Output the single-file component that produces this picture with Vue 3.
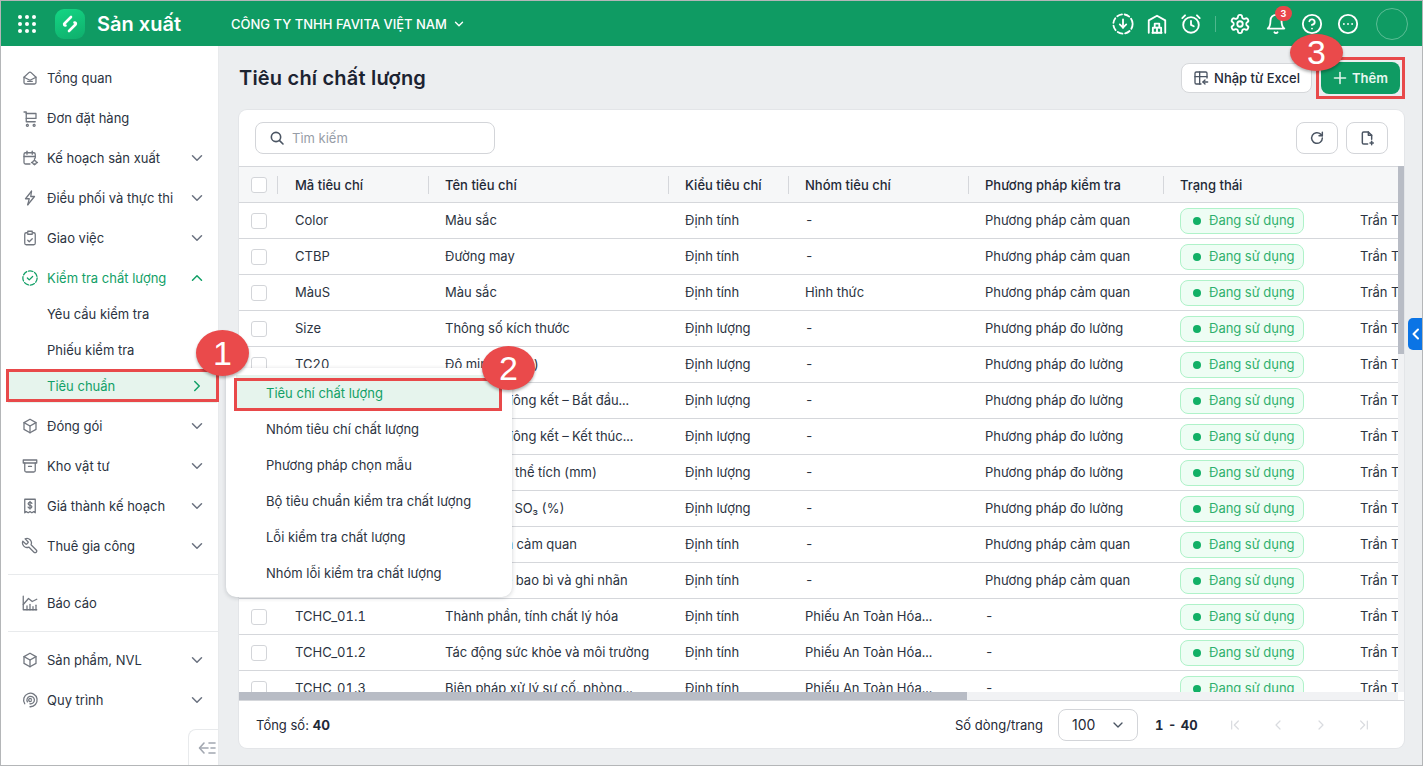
<script setup>
const chev = 'M6 9l6 6 6-6'
const menuTop = [
  { label: 'Tổng quan', d: ['M4 11l6.5-6.2a2.2 2.2 0 0 1 3 0L20 11v7a2 2 0 0 1-2 2H6a2 2 0 0 1-2-2z', 'M4 11l8 4 8-4', 'M9 16.5h6'] },
  { label: 'Đơn đặt hàng', d: ['M4 4h3v13h12', 'M7 6h13v6.5H7', 'M8.5 20.5a1.3 1.3 0 1 0 .01 0', 'M17.5 20.5a1.3 1.3 0 1 0 .01 0'] },
  { label: 'Kế hoạch sản xuất', arrow: true, d: ['M12 20H6a2 2 0 0 1-2-2V7a2 2 0 0 1 2-2h11a2 2 0 0 1 2 2v5', 'M4 10h15', 'M8 3v4', 'M15 3v4', 'M18 15.5a2.5 2.5 0 1 0 .01 0', 'M18 14v-1', 'M18 21v-1', 'M15 18h-1', 'M22 18h-1'] },
  { label: 'Điều phối và thực thi', arrow: true, d: ['M14 3L6 13h5l-2 8', 'M14 3l-1 7h5l-9 11'] },
  { label: 'Giao việc', arrow: true, d: ['M8 5H7a2 2 0 0 0-2 2v12a2 2 0 0 0 2 2h10a2 2 0 0 0 2-2V7a2 2 0 0 0-2-2h-1', 'M9 3h6v4H9z', 'M9 15l2 2 4-4'] },
]
const menuBottom = [
  { label: 'Đóng gói', arrow: true, d: ['M12 3l8 4.5v9L12 21l-8-4.5v-9z', 'M4 7.5l8 4.5 8-4.5', 'M12 12v9'] },
  { label: 'Kho vật tư', arrow: true, d: ['M3 4h18v4H3z', 'M5 8v10a2 2 0 0 0 2 2h10a2 2 0 0 0 2-2V8', 'M10 12.5h4'] },
  { label: 'Giá thành kế hoạch', arrow: true, d: ['M5 3h14v18l-2-1.5-2.5 1.5-2.5-1.5L9.500 21 7 19.500 5 21z', 'M14.500 8.500c-.5-1-1.500-1.300-2.500-1.300-1.300 0-2.500.7-2.500 1.900 0 2.600 5 1.300 5 3.800 0 1.200-1.200 1.900-2.500 1.900-1 0-2-.4-2.500-1.300', 'M12 6v10'] },
  { label: 'Thuê gia công', arrow: true, d: ['M14.700 6.300a1 1 0 0 0 0 1.400l1.600 1.600a1 1 0 0 0 1.400 0l3.800-3.800a6 6 0 0 1-7.900 7.900l-6.900 6.900a2.100 2.100 0 0 1-3-3l6.900-6.900a6 6 0 0 1 7.900-7.900z'], flip: true },
]
const menuLast = [
  { label: 'Sản phẩm, NVL', arrow: true, d: ['M12 3l8 4.500v9L12 21l-8-4.500v-9z', 'M4 7.500l8 4.500 8-4.500', 'M12 12v9'] },
  { label: 'Quy trình', arrow: true, d: ['M5 17A9 9 0 1 1 12 21', 'M8.500 14.500A5 5 0 1 1 12 17', 'M14 11a2 2 0 1 0 0 2'] },
]
const report = { label: 'Báo cáo', d: ['M3 3v18h18', 'M3 14l7-8 5 4 6-3', 'M8 21v-5', 'M12 21v-7', 'M16 21v-4', 'M20 21v-6'] }
const subItems = ['Yêu cầu kiểm tra', 'Phiếu kiểm tra']
const flyout = ['Tiêu chí chất lượng', 'Nhóm tiêu chí chất lượng', 'Phương pháp chọn mẫu', 'Bộ tiêu chuẩn kiểm tra chất lượng', 'Lỗi kiểm tra chất lượng', 'Nhóm lỗi kiểm tra chất lượng']

const cq = 'Phương pháp cảm quan'
const dl = 'Phương pháp đo lường'
const hh = 'Phiếu An Toàn Hóa...'
const rows = [
  ['Color', 'Màu sắc', 'Định tính', '-', cq],
  ['CTBP', 'Đường may', 'Định tính', '-', cq],
  ['MàuS', 'Màu sắc', 'Định tính', 'Hình thức', cq],
  ['Size', 'Thông số kích thước', 'Định lượng', '-', dl],
  ['TC20', 'Độ mịn (Blaine)', 'Định lượng', '-', dl],
  ['TC21', 'Thời gian đông kết – Bắt đầu...', 'Định lượng', '-', dl],
  ['TC22', 'Thời gian đông kết – Kết thúc...', 'Định lượng', '-', dl],
  ['TC23', 'Độ ổn định thể tích (mm)', 'Định lượng', '-', dl],
  ['TC24', 'Hàm lượng SO₃ (%)', 'Định lượng', '-', dl],
  ['TC25', 'Tiêu chuẩn cảm quan', 'Định tính', '-', cq],
  ['TC26', 'Yêu cầu về bao bì và ghi nhãn', 'Định tính', '-', cq],
  ['TCHC_01.1', 'Thành phần, tính chất lý hóa', 'Định tính', hh, '-'],
  ['TCHC_01.2', 'Tác động sức khỏe và môi trường', 'Định tính', hh, '-'],
  ['TCHC_01.3', 'Biện pháp xử lý sự cố, phòng...', 'Định tính', hh, '-'],
]
const heads = ['Mã tiêu chí', 'Tên tiêu chí', 'Kiểu tiêu chí', 'Nhóm tiêu chí', 'Phương pháp kiểm tra', 'Trạng thái']
</script>

<template>
  <div class="frame">
    <header class="topbar">
      <svg class="grid-ico" width="20" height="20" viewBox="0 0 20 20" fill="#fff">
        <template v-for="y in [3, 10, 17]" :key="y">
          <circle v-for="x in [3, 10, 17]" :key="x" :cx="x" :cy="y" r="2" />
        </template>
      </svg>
      <div class="logo">
        <svg width="20" height="20" viewBox="0 0 20 20" fill="none" stroke="#fff" stroke-width="2.6" stroke-linecap="round" stroke-linejoin="round">
          <path d="M11 3L4.500 9.500c-.8.8-.2 2 1 2" />
          <path d="M9 17l6.500-6.500c.8-.8.2-2-1-2" />
        </svg>
      </div>
      <span class="app-name">Sản xuất</span>
      <span class="company">CÔNG TY TNHH FAVITA VIỆT NAM</span>
      <svg class="company-chev" width="14" height="14" viewBox="0 0 24 24" fill="none" stroke="#fff" stroke-width="2.4" stroke-linecap="round" stroke-linejoin="round"><path :d="chev" /></svg>

      <div class="top-actions">
        <svg class="ti" viewBox="0 0 24 24"><circle cx="12" cy="12" r="10.500" stroke-dasharray="5.500 3" /><path d="M12 7v9" /><path d="M8.500 12.500L12 16l3.500-3.500" /></svg>
        <svg class="ti" viewBox="0 0 24 24"><path d="M3 21.500V8l9-5 9 5v13.500" /><path d="M7 21.500h10" /><path d="M7.500 21.500V16h9v5.500" /><path d="M9.500 16v-4.500h5V16" /><path d="M12 16v5.500" /></svg>
        <svg class="ti" viewBox="0 0 24 24"><circle cx="12" cy="13" r="8.500" /><path d="M12 8.500V13l3 1.500" /><path d="M5.500 2.500L2.500 5.500" /><path d="M18.500 2.500l3 3" /></svg>
        <span class="top-sep"></span>
        <svg class="ti" viewBox="0 0 24 24"><path d="M12.220 2h-.44a2 2 0 0 0-2 2v.18a2 2 0 0 1-1 1.730l-.43.25a2 2 0 0 1-2 0l-.15-.08a2 2 0 0 0-2.730.73l-.22.38a2 2 0 0 0 .73 2.730l.15.1a2 2 0 0 1 1 1.720v.51a2 2 0 0 1-1 1.740l-.15.09a2 2 0 0 0-.73 2.730l.22.38a2 2 0 0 0 2.730.73l.15-.08a2 2 0 0 1 2 0l.43.25a2 2 0 0 1 1 1.730V20a2 2 0 0 0 2 2h.44a2 2 0 0 0 2-2v-.18a2 2 0 0 1 1-1.730l.43-.25a2 2 0 0 1 2 0l.15.08a2 2 0 0 0 2.730-.73l.22-.39a2 2 0 0 0-.73-2.730l-.15-.08a2 2 0 0 1-1-1.740v-.5a2 2 0 0 1 1-1.740l.15-.09a2 2 0 0 0 .73-2.730l-.22-.38a2 2 0 0 0-2.730-.73l-.15.08a2 2 0 0 1-2 0l-.43-.25a2 2 0 0 1-1-1.730V4a2 2 0 0 0-2-2z" /><circle cx="12" cy="12" r="3" /></svg>
        <span class="bell">
          <svg class="ti" viewBox="0 0 24 24"><path d="M6 8a6 6 0 0 1 12 0c0 7 3 9 3 9H3s3-2 3-9" /><path d="M10.300 21a1.940 1.940 0 0 0 3.400 0" /></svg>
          <span class="badge">3</span>
        </span>
        <svg class="ti wide" viewBox="0 0 24 24"><circle cx="12" cy="12" r="10" /><path d="M9.090 9a3 3 0 0 1 5.830 1c0 2-3 3-3 3" /><path d="M12 17h.01" /></svg>
        <svg class="ti wide" viewBox="0 0 24 24"><circle cx="12" cy="12" r="10" /><path d="M7.500 12h.01" /><path d="M12 12h.01" /><path d="M16.500 12h.01" /></svg>
        <span class="avatar"></span>
      </div>
    </header>

    <div class="body">
      <aside class="sidebar">
        <div v-for="m in menuTop" :key="m.label" class="item">
          <svg class="mi" viewBox="0 0 24 24"><path v-for="p in m.d" :key="p" :d="p" /></svg>
          <span class="lbl">{{ m.label }}</span>
          <svg v-if="m.arrow" class="arrow" viewBox="0 0 24 24"><path :d="chev" /></svg>
        </div>

        <div class="item active">
          <svg class="mi" viewBox="0 0 24 24"><circle cx="12" cy="12" r="9.500" stroke-dasharray="6 2.500" /><path d="M8.500 12l2.500 2.500 4.500-4.500" /></svg>
          <span class="lbl">Kiểm tra chất lượng</span>
          <svg class="arrow" viewBox="0 0 24 24"><path d="M6 15l6-6 6 6" /></svg>
        </div>
        <div class="subs">
          <div v-for="s in subItems" :key="s" class="sub">{{ s }}</div>
          <div class="sub sub-on">
            <span class="lbl">Tiêu chuẩn</span>
            <svg class="arrow" viewBox="0 0 24 24"><path d="M9 6l6 6-6 6" /></svg>
          </div>
        </div>

        <div v-for="m in menuBottom" :key="m.label" class="item">
          <svg class="mi" :class="{ flip: m.flip }" viewBox="0 0 24 24"><path v-for="p in m.d" :key="p" :d="p" /></svg>
          <span class="lbl">{{ m.label }}</span>
          <svg class="arrow" viewBox="0 0 24 24"><path :d="chev" /></svg>
        </div>

        <hr class="rule" />
        <div class="item">
          <svg class="mi" viewBox="0 0 24 24"><path v-for="p in report.d" :key="p" :d="p" /></svg>
          <span class="lbl">{{ report.label }}</span>
        </div>
        <hr class="rule" />

        <div v-for="m in menuLast" :key="m.label" class="item">
          <svg class="mi" viewBox="0 0 24 24"><path v-for="p in m.d" :key="p" :d="p" /></svg>
          <span class="lbl">{{ m.label }}</span>
          <svg class="arrow" viewBox="0 0 24 24"><path :d="chev" /></svg>
        </div>

        <div class="collapse">
          <svg width="18" height="14" viewBox="0 0 18 14" fill="none" stroke="#a3a8b1" stroke-width="1.600" stroke-linecap="round" stroke-linejoin="round"><path d="M6 2L1.500 7 6 12" /><path d="M2 7h8" /><path d="M11 2h6" /><path d="M13 7h4" /><path d="M11 12h6" /></svg>
        </div>
      </aside>

      <main class="main">
        <div class="page-head">
          <h1>Tiêu chí chất lượng</h1>
          <div class="page-btns">
            <button class="btn-excel">
              <svg width="16" height="16" viewBox="0 0 24 24" fill="none" stroke="#4b5563" stroke-width="2" stroke-linecap="round" stroke-linejoin="round"><path d="M12 21H5a2 2 0 0 1-2-2V5a2 2 0 0 1 2-2h14a2 2 0 0 1 2 2v7" /><path d="M3 10h18" /><path d="M10 3v18" /><path d="M22 18h-7" /><path d="M18 15l-3 3 3 3" /></svg>
              Nhập từ Excel
            </button>
            <button class="btn-add">
              <svg width="14" height="14" viewBox="0 0 14 14" fill="none" stroke="#dff3ea" stroke-width="1.600" stroke-linecap="round"><path d="M7 1.500v11" /><path d="M1.500 7h11" /></svg>
              Thêm
            </button>
          </div>
        </div>

        <section class="card">
          <div class="toolbar">
            <div class="search">
              <svg width="16" height="16" viewBox="0 0 24 24" fill="none" stroke="#4b5563" stroke-width="2.400" stroke-linecap="round"><circle cx="10.500" cy="10.500" r="7" /><path d="M21 21l-5.500-5.500" /></svg>
              <span>Tìm kiếm</span>
            </div>
            <div class="tools">
              <button class="tool">
                <svg width="16" height="16" viewBox="0 0 24 24" fill="none" stroke="#4b5563" stroke-width="2.200" stroke-linecap="round" stroke-linejoin="round"><path d="M20 12a8 8 0 1 1-2.500-5.800L20 8.500" /><path d="M20 3.500v5h-5" /></svg>
              </button>
              <button class="tool">
                <svg width="16" height="16" viewBox="0 0 24 24" fill="none" stroke="#4b5563" stroke-width="2.200" stroke-linecap="round" stroke-linejoin="round"><path d="M13 21H7a2 2 0 0 1-2-2V5a2 2 0 0 1 2-2h7l5 5v6" /><path d="M14 3v5h5" /><path d="M19 17v5" /><path d="M16.500 19.500h5" /></svg>
              </button>
            </div>
          </div>

          <div class="table-zone">
            <div class="table-view">
              <div class="tr th">
                <div class="c c0"><span class="box"></span></div>
                <div v-for="(h, i) in heads" :key="h" class="c" :class="'c' + (i + 1)">{{ h }}</div>
              </div>
              <div v-for="r in rows" :key="r[0]" class="tr">
                <div class="c c0"><span class="box"></span></div>
                <div v-for="(v, i) in r" :key="i" class="c txt" :class="'c' + (i + 1)">{{ v }}</div>
                <div class="c c6"><span class="pill"><i></i>Đang sử dụng</span></div>
                <div class="c c7 txt">Trần Thị Hoa</div>
              </div>
            </div>
            <div class="vbar"><div class="vthumb"></div></div>
          </div>
          <div class="hbar"><div class="hthumb"></div></div>

          <div class="foot">
            <span class="total">Tổng số: <b>40</b></span>
            <span class="per">Số dòng/trang</span>
            <div class="select">
              <span>100</span>
              <svg width="16" height="16" viewBox="0 0 24 24" fill="none" stroke="#4b5563" stroke-width="2" stroke-linecap="round" stroke-linejoin="round"><path :d="chev" /></svg>
            </div>
            <b class="range">1 - 40</b>
            <div class="pager">
              <svg viewBox="0 0 24 24"><path d="M17 6l-6 6 6 6" /><path d="M7 6v12" /></svg>
              <svg viewBox="0 0 24 24"><path d="M15 6l-6 6 6 6" /></svg>
              <svg viewBox="0 0 24 24"><path d="M9 6l6 6-6 6" /></svg>
              <svg viewBox="0 0 24 24"><path d="M7 6l6 6-6 6" /><path d="M17 6v12" /></svg>
            </div>
          </div>
        </section>
      </main>
    </div>

    <div class="flyout">
      <div v-for="(f, i) in flyout" :key="f" class="fly-item" :class="{ on: i === 0 }">{{ f }}</div>
    </div>

    <div class="side-tab">
      <svg width="10" height="12" viewBox="0 0 10 12" fill="none" stroke="#fff" stroke-width="2" stroke-linecap="round" stroke-linejoin="round"><path d="M7 1.500L2.500 6 7 10.500" /></svg>
    </div>

    <span class="mark mark1"></span>
    <span class="mark mark2"></span>
    <span class="mark mark3"></span>
    <span class="num num1">1</span>
    <span class="num num2">2</span>
    <span class="num num3">3</span>
  </div>
</template>

<style>
html, body { margin: 0; padding: 0; background: #fff; }
</style>

<style scoped>
* { box-sizing: border-box; }
.frame {
  position: relative;
  width: 1423px;
  height: 766px;
  border: 1px solid #b4b6b8;
  overflow: hidden;
  display: flex;
  flex-direction: column;
  font-family: Inter, "Noto Sans", sans-serif;
  font-size: 13px;
  color: #1f2937;
  background: #eceef0;
}

/* top bar */
.topbar {
  height: 45px;
  flex: none;
  background: #0f9b63;
  display: flex;
  align-items: center;
  color: #fff;
  padding-left: 16px;
}
.grid-ico { flex: none; }
.logo {
  width: 30px;
  height: 30px;
  margin-left: 18px;
  border-radius: 9px;
  background: linear-gradient(160deg, #14d684, #0fae6c);
  display: flex;
  align-items: center;
  justify-content: center;
  flex: none;
}
.app-name { margin-left: 12px; font-size: 20px; font-weight: 600; width: 134px; flex: none; }
.company { font-size: 13px; font-weight: 500; }
.company-chev { margin-left: 5px; }
.top-actions { margin-left: auto; display: flex; align-items: center; padding-right: 14px; }
.ti { width: 22px; height: 22px; fill: none; stroke: #fff; stroke-width: 2; stroke-linecap: round; stroke-linejoin: round; flex: none; display: block; margin-left: 12px; }
.top-actions > .ti:first-child { margin-left: 0; }
.top-sep { width: 1px; height: 16px; background: #4fb78e; margin: 0 13px; }
.top-sep + .ti { margin-left: 0; }
.bell { position: relative; margin-left: 14px; }
.bell .ti { margin-left: 0; }
.ti.wide { margin-left: 14px; }
.badge {
  position: absolute;
  top: -7px;
  left: 10px;
  width: 17px;
  height: 15px;
  border-radius: 8px;
  background: #e9474a;
  font-size: 9px;
  font-weight: 700;
  line-height: 15px;
  text-align: center;
}
.avatar { width: 32px; height: 32px; border-radius: 50%; border: 1px solid #5cbd95; margin-left: 17px; }

/* page body */
.body { flex: 1; min-height: 0; display: flex; }
.sidebar {
  position: relative;
  width: 218px;
  flex: none;
  background: #fff;
  padding: 14px 0 0 7px;
  border-right: 1px solid #e8eaec;
}
.item {
  height: 36px;
  margin-bottom: 4px;
  display: flex;
  align-items: center;
  padding-left: 13px;
  color: #2b3341;
}
.mi { width: 18px; height: 18px; fill: none; stroke: #71767f; stroke-width: 1.700; stroke-linecap: round; stroke-linejoin: round; flex: none; }
.flip { transform: scaleX(-1); }
.lbl { margin-left: 8px; flex: 1; white-space: nowrap; }
.arrow { width: 18px; height: 18px; fill: none; stroke: #6b7280; stroke-width: 2; stroke-linecap: round; stroke-linejoin: round; flex: none; margin-right: 12px; }
.active { color: #12a067; margin-bottom: 0; }
.active .mi, .active .arrow { stroke: #12a067; }
.subs { margin-bottom: 5px; }
.sub { height: 36px; display: flex; align-items: center; padding-left: 39px; color: #2b3341; }
.sub-on { background: #e6f4ed; color: #12a067; height: 34px; margin: 1px 1px 1px 0; }
.sub-on .lbl { margin-left: 0; }
.sub-on .arrow { stroke: #12a067; margin-right: 11px; }
.rule { border: 0; border-top: 1px solid #e8eaec; margin: 10px 0; }

/* main */
.collapse {
  position: absolute;
  right: 0;
  bottom: 0;
  width: 30px;
  height: 36px;
  border: 1px solid #e8eaec;
  border-right: 0;
  border-bottom: 0;
  border-top-left-radius: 8px;
  background: #fff;
  display: flex;
  align-items: center;
  justify-content: center;
  padding-left: 6px;
}
.main { flex: 1; min-width: 0; padding: 0 18px 17px 20px; display: flex; flex-direction: column; }
.page-head { height: 64px; flex: none; display: flex; align-items: center; justify-content: space-between; padding-right: 4px; }
h1 { margin: 0; font-size: 20px; font-weight: 600; letter-spacing: .2px; color: #1c2331; }
.page-btns { display: flex; align-items: center; gap: 9px; }
button { font-family: inherit; font-size: 13px; cursor: pointer; padding: 0; }
.btn-excel {
  width: 131px;
  height: 30px;
  background: #fff;
  border: 1px solid #d6d8db;
  border-radius: 8px;
  display: flex;
  align-items: center;
  justify-content: center;
  gap: 5px;
  color: #1f2937;
  font-weight: 500;
}
.btn-add {
  width: 79px;
  height: 32px;
  background: #0f9b63;
  border: 0;
  border-radius: 8px;
  color: #e9f7f0;
  font-weight: 600;
  display: flex;
  align-items: center;
  justify-content: center;
  gap: 5px;
}

.card {
  flex: 1;
  min-height: 0;
  background: #fff;
  border-radius: 8px;
  display: flex;
  flex-direction: column;
  overflow: hidden;
  box-shadow: 0 0 0 1px #e3e5e8;
}
.toolbar { height: 56px; flex: none; display: flex; align-items: center; justify-content: space-between; padding: 0 16px; }
.search {
  width: 240px;
  height: 32px;
  border: 1px solid #d3d5d9;
  border-radius: 8px;
  display: flex;
  align-items: center;
  gap: 7px;
  padding-left: 13px;
  color: #979da7;
}
.tools { display: flex; gap: 8px; }
.tool {
  width: 42px;
  height: 32px;
  background: #fff;
  border: 1px solid #d3d5d9;
  border-radius: 8px;
  display: flex;
  align-items: center;
  justify-content: center;
}

.table-zone { flex: 1; min-height: 0; display: flex; }
.table-view { flex: 1; min-width: 0; overflow: hidden; border-top: 1px solid #d5d7db; font-variant-numeric: tabular-nums; }
.tr { display: flex; height: 36px; align-items: center; border-bottom: 1px solid #d5d7db; white-space: nowrap; background: #fff; color: #2b3341; }
.th { height: 36px; background: #f6f7f8; color: #1f2937; font-weight: 500; }
.c { flex: none; padding-left: 16px; position: relative; overflow: hidden; }
.txt { padding-bottom: 2px; }
.c0 { width: 40px; padding-left: 12px; display: flex; align-items: center; }
.c1 { width: 150px; }
.c2 { width: 240px; }
.c3 { width: 120px; }
.c4 { width: 180px; }
.c5 { width: 195px; }
.c6 { width: 180px; }
.c7 { width: 120px; }
.th .c::before {
  content: "";
  position: absolute;
  left: -1px;
  top: -1px;
  bottom: -1px;
  width: 1px;
  background: #d5d7db;
}
.th .c0::before { display: none; }
.th .c1::before { left: -2px; }
.th .c { overflow: visible; }
.box { width: 16px; height: 16px; border: 1px solid #d3d5d9; border-radius: 3px; background: #fff; display: block; }
.pill {
  display: inline-flex;
  align-items: center;
  height: 26px;
  width: 124px;
  border: 1px solid #aff2c9;
  border-radius: 8px;
  background: #eefdf4;
  color: #2fb06d;
  padding: 0 0 2px 12px;
  gap: 8px;
  vertical-align: middle;
}
.pill i { width: 8px; height: 8px; border-radius: 50%; background: #12b066; flex: none; margin-top: 2px; }
.vbar { width: 6px; flex: none; background: #f1f2f4; }
.vthumb { height: 188px; background: #b8bcc5; }
.hbar { height: 8px; flex: none; background: #f1f2f4; margin-right: 6px; }
.hthumb { width: 728px; height: 8px; background: #b8bcc5; }
.foot { height: 48px; flex: none; border-top: 1px solid #d5d7db; display: flex; align-items: center; padding-left: 17px; }
.total { flex: 1; }
.total b { font-weight: 700; }
.per { margin-right: 15px; }
.select {
  width: 80px;
  height: 32px;
  border: 1px solid #d3d5d9;
  border-radius: 8px;
  display: flex;
  align-items: center;
  justify-content: space-between;
  padding: 0 11px 0 13px;
  font-size: 14px;
}
.range { margin-left: 17px; width: 51px; white-space: nowrap; font-weight: 700; word-spacing: 1px; font-variant-numeric: tabular-nums; }
.pager { display: flex; gap: 27px; margin-left: 21px; padding-right: 32px; }
.pager svg { width: 16px; height: 16px; fill: none; stroke: #d9dbdf; stroke-width: 1.800; stroke-linecap: round; stroke-linejoin: round; }

/* overlays */
.flyout {
  position: absolute;
  left: 225px;
  top: 367px;
  width: 286px;
  height: 229px;
  background: #fff;
  border-radius: 0 0 10px 10px;
  box-shadow: 0 1px 4px rgba(40, 50, 60, .22);
  padding: 7px 12px 6px 10px;
  z-index: 5;
}
.fly-item { height: 36px; display: flex; align-items: center; padding-left: 30px; color: #2b3341; white-space: nowrap; }
.fly-item.on { background: #e6f4ed; color: #12a067; }
.side-tab {
  position: absolute;
  left: 1407px;
  top: 317px;
  width: 15px;
  height: 32px;
  background: #0b74e5;
  border-radius: 5px 0 0 5px;
  display: flex;
  align-items: center;
  justify-content: center;
  z-index: 4;
}
.mark { position: absolute; border: 3px solid #e8494a; z-index: 6; pointer-events: none; }
.mark1 { left: 5px; top: 368px; width: 213px; height: 33px; }
.mark2 { left: 233px; top: 377px; width: 268px; height: 33px; }
.mark3 { left: 1315px; top: 56px; width: 89px; height: 42px; }
.num {
  position: absolute;
  width: 53px;
  border-radius: 50%;
  background: #ea4a4b;
  box-shadow: 0 2px 3px rgba(0, 0, 0, .3);
  color: #fff;
  font-family: "Liberation Sans", Arial, sans-serif;
  font-size: 34px;
  display: flex;
  align-items: center;
  justify-content: center;
  z-index: 7;
}
.num1 { left: 195px; top: 329px; height: 46px; }
.num2 { left: 481px; top: 345px; height: 44px; }
.num3 { left: 1289px; top: 33px; height: 37px; }
</style>
